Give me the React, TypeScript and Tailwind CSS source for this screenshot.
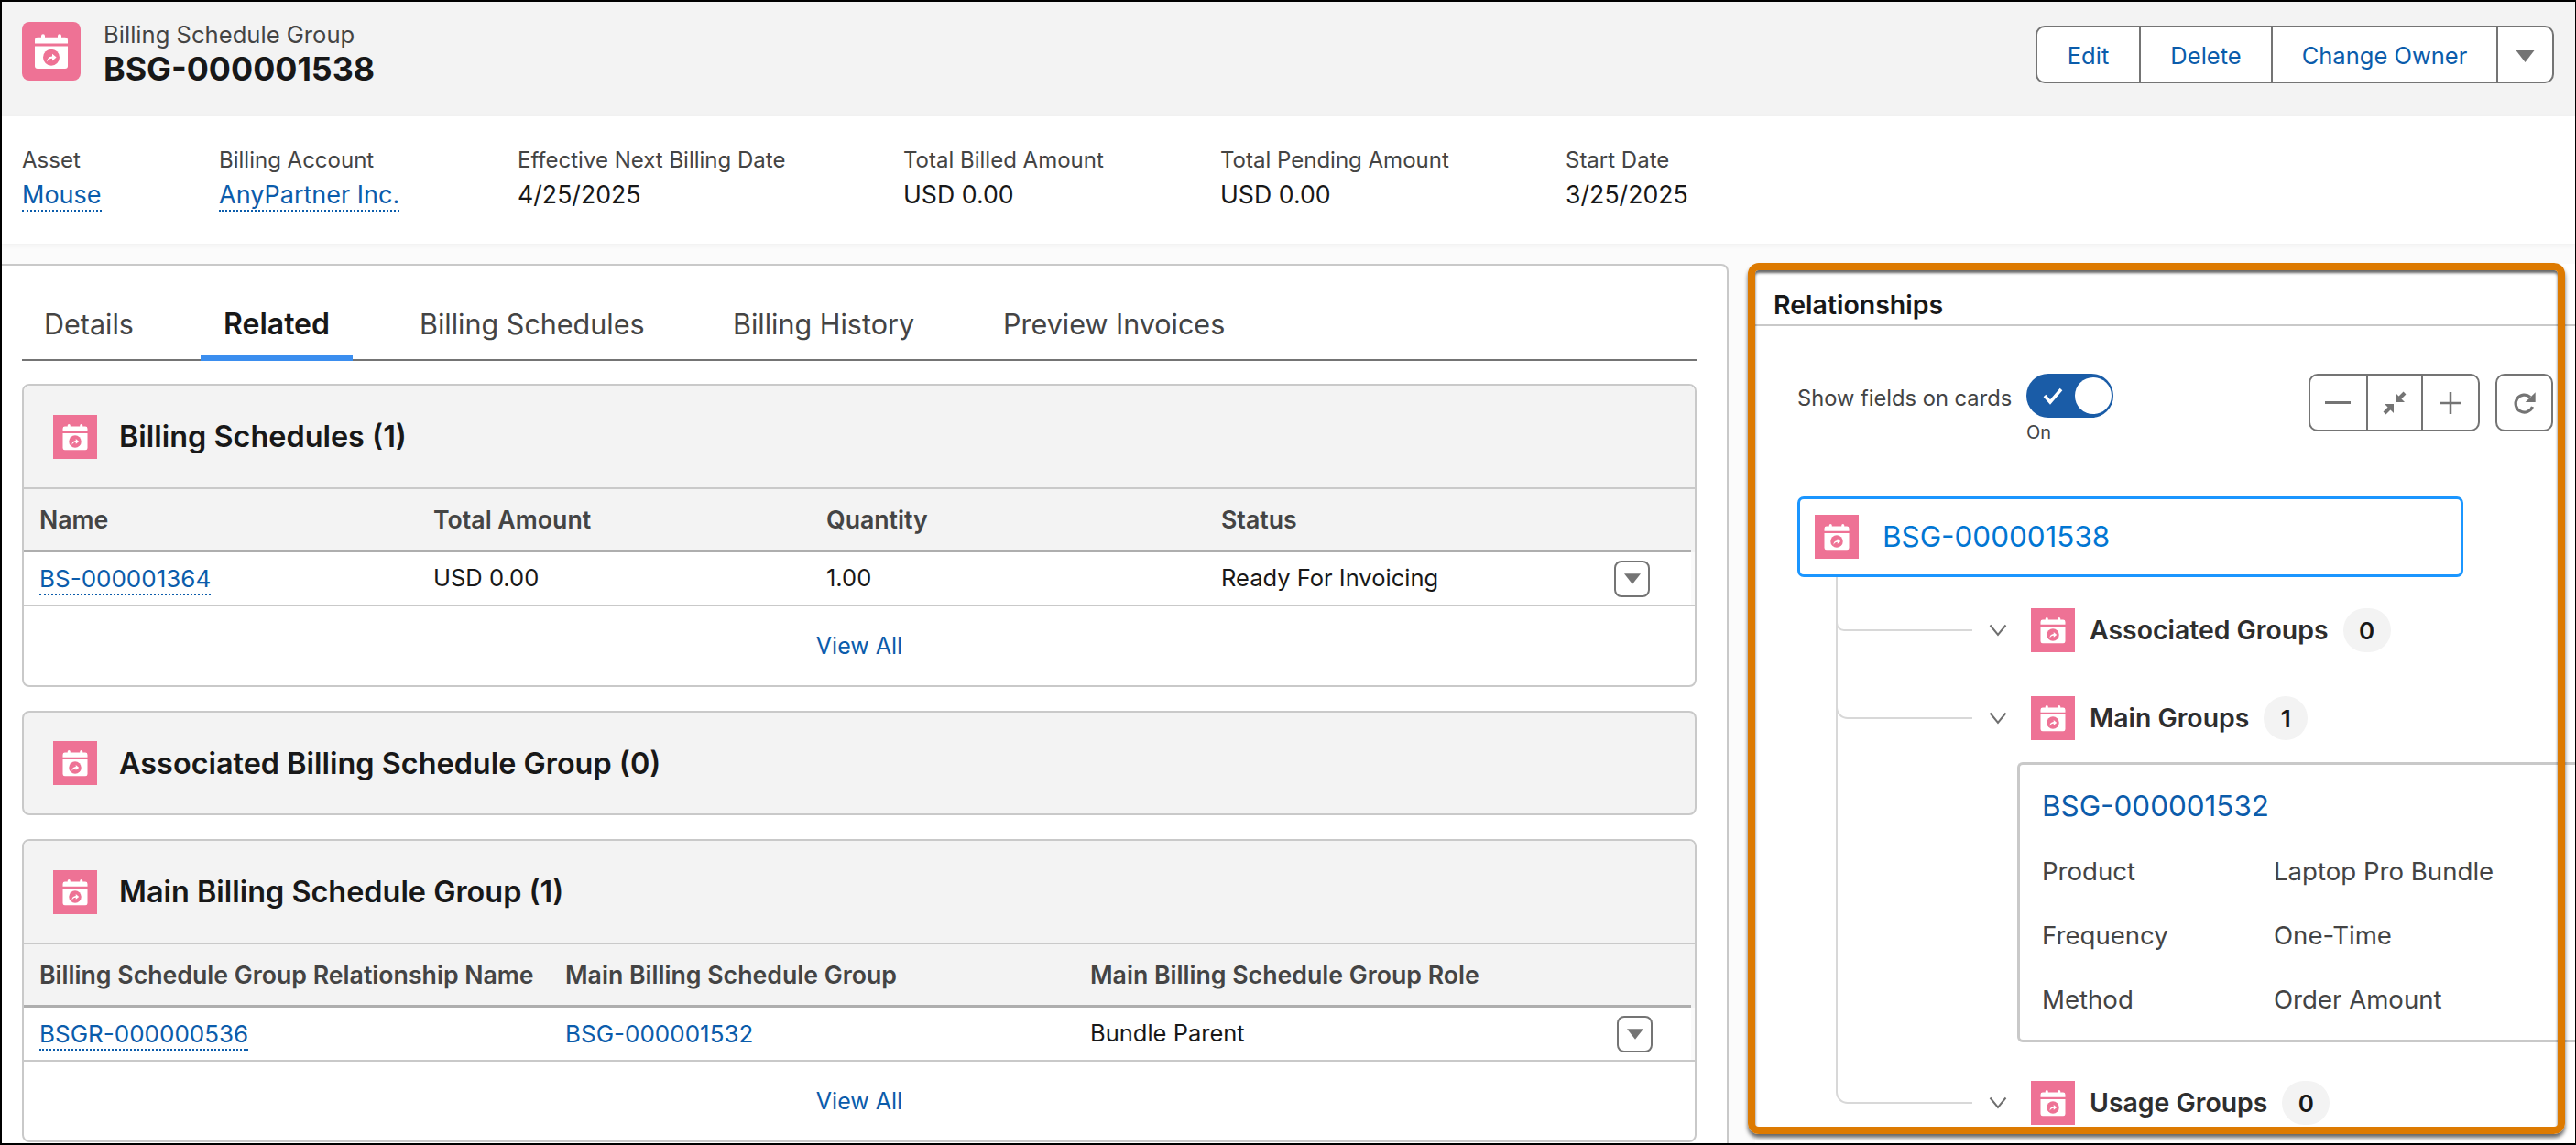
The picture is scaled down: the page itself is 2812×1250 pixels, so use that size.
import React from "react";

function CalIcon({ size, rounded }: { size: number; rounded?: boolean }) {
  return (
    <svg width={size} height={size} viewBox="0 0 64 64" className="shrink-0 block">
      <rect width="64" height="64" rx={rounded ? 8 : 0} fill="#ee7295" />
      <path d="M14 23.500v-3.500a3.200 3.200 0 0 1 3.200-3.200H21v-1.600a2 2 0 0 1 4 0v1.600h14v-1.600a2 2 0 0 1 4 0v1.600h3.800A3.200 3.200 0 0 1 50 20v3.500z" fill="#fff" />
      <path d="M14 26.500h36V48a3 3 0 0 1-3 3H17a3 3 0 0 1-3-3z" fill="#fff" />
      <circle cx="32" cy="38.700" r="9" fill="#ee7295" />
      <path d="M27.200 43.600c.2-3.600 2.400-6 5.800-6.200v-2.600l4.600 3.800-4.600 3.800v-2.600c-2.600.1-4.300 1.300-5.800 3.800z" fill="#fff" />
    </svg>
  );
}

function Caret({ w, h }: { w: number; h: number }) {
  return (
    <svg width={w} height={h} viewBox="0 0 20 13" className="block">
      <path d="M0 0h20L10 13z" fill="#747474" />
    </svg>
  );
}

function Chevron() {
  return (
    <svg width="20" height="14" viewBox="0 0 20 14" className="block shrink-0">
      <path d="M1.500 1.500 10 12l8.500-10.500" fill="none" stroke="#6f6f6f" strokeWidth="2" />
    </svg>
  );
}

function Link({ children, className = "" }: { children: React.ReactNode; className?: string }) {
  return (
    <span className={`inline-block mt-[3px] text-[#0b5cab] border-b-2 border-dotted border-[#0b5cab] leading-none pb-[3px] ${className}`}>
      {children}
    </span>
  );
}

function Field({ label, width, link, children }: { label: string; width: string; link?: boolean; children: React.ReactNode }) {
  return (
    <div className={`flex flex-col ${width}`}>
      <div className="text-[24px] leading-[32px] text-[#444444]">{label}</div>
      <div className={`${link ? "text-[27px]" : "text-[26.700px]"} leading-[32px] mt-[5px] text-[#181818]`}>{children}</div>
    </div>
  );
}

function CardHeader({ title, border }: { title: string; border?: boolean }) {
  return (
    <div className={`flex items-center pl-[32px] gap-[24px] ${border ? "border-b-2 border-[#c9c9c9] h-[113px]" : "h-[110px]"}`}>
      <CalIcon size={48} />
      <div className="text-[32.400px] font-semibold text-[#181818] leading-none mt-[2px]">{title}</div>
    </div>
  );
}

function ViewAll() {
  return (
    <div className="h-[86px] flex items-center justify-center text-[25px] text-[#0b5cab] pt-[2px]">View All</div>
  );
}

function RowButton({ className }: { className: string }) {
  return (
    <div className={`w-[39px] h-[40px] border-2 border-[#747474] rounded-[8px] flex items-center justify-center bg-white shrink-0 ${className}`}>
      <Caret w={18} h={12} />
    </div>
  );
}

function Tab({ children, active, className }: { children: string; active?: boolean; className: string }) {
  return (
    <div className={`h-[102px] flex items-center ${active ? "text-[32px] font-semibold text-[#181818]" : "text-[30.500px] text-[#444444]"} ${className}`}>
      <span className="mt-[26px]">{children}</span>
    </div>
  );
}

function TreeRow({ label, count, badgeW, className = "" }: { label: string; count: string; badgeW: string; className?: string }) {
  return (
    <div className={`ml-[209px] flex items-center h-[48px] ${className}`}>
      <Chevron />
      <div className="ml-[26px]"><CalIcon size={48} /></div>
      <div className="ml-[16px] text-[28.400px] font-semibold text-[#2e2e2e] leading-none">{label}</div>
      <div className={`ml-[16px] h-[48px] rounded-full bg-[#f3f3f3] flex items-center justify-center text-[26px] font-semibold text-[#181818] ${badgeW}`}>{count}</div>
    </div>
  );
}

function DetailRow({ k, v, className = "" }: { k: string; v: string; className?: string }) {
  return (
    <div className={`flex text-[27.600px] leading-[32px] text-[#444444] ${className}`}>
      <div className="w-[253px]">{k}</div>
      <div>{v}</div>
    </div>
  );
}

export default function App() {
  return (
    <div className="w-[2812px] h-[1250px] box-border border-2 border-r-[1px] border-black bg-[#fbfbfb] flex flex-col overflow-hidden font-['Inter','Noto_Sans',sans-serif]">
      {/* Page header */}
      <div className="h-[125px] shrink-0 bg-[#f3f3f3] flex items-start pl-[22px] pr-[23px] pt-[22px]">
        <CalIcon size={64} rounded />
        <div className="ml-[25px] flex flex-col">
          <div className="text-[25.600px] leading-[28px] text-[#444444]">Billing Schedule Group</div>
          <div className="text-[35.800px] leading-[44px] font-bold text-[#181818] mt-[1px]">BSG-000001538</div>
        </div>
        <div className="ml-auto mt-[4px] h-[63px] w-[566px] flex border-2 border-[#747474] rounded-[10px] bg-white text-[25.500px] text-[#0b5cab]">
          <div className="w-[111px] flex items-center justify-center pt-[3px]">Edit</div>
          <div className="w-[144px] flex items-center justify-center border-l-2 border-[#747474] pt-[3px]">Delete</div>
          <div className="w-[246px] flex items-center justify-center border-l-2 border-[#747474] pt-[3px]">Change Owner</div>
          <div className="flex-1 flex items-center justify-center border-l-2 border-[#747474] pt-[3px]"><Caret w={21} h={13} /></div>
        </div>
      </div>

      {/* Highlights */}
      <div className="h-[139px] shrink-0 bg-white flex items-start pl-[22px] pt-[32px] shadow-[0_2px_6px_rgba(0,0,0,0.05)] relative">
        <Field label="Asset" width="w-[215px]" link><Link>Mouse</Link></Field>
        <Field label="Billing Account" width="w-[326px]" link><Link>AnyPartner Inc.</Link></Field>
        <Field label="Effective Next Billing Date" width="w-[421px]">4/25/2025</Field>
        <Field label="Total Billed Amount" width="w-[346px]">USD 0.00</Field>
        <Field label="Total Pending Amount" width="w-[377px]">USD 0.00</Field>
        <Field label="Start Date" width="w-[300px]">3/25/2025</Field>
      </div>

      <div className="h-[22px] shrink-0" />

      {/* Body */}
      <div className="flex-1 min-h-0 flex relative">
        {/* Left */}
        <div className="w-[1885px] shrink-0 bg-white border-t-2 border-r-2 border-[#c9c9c9] rounded-tr-[8px] pl-[22px] overflow-hidden">
          <div className="w-[1828px] h-[104px] box-border border-b-2 border-[#747474] flex">
            <Tab className="pl-[24px] w-[195px]">Details</Tab>
            <div className="w-[166px] h-[104px] box-border border-b-[6px] border-[#3b8eef] flex justify-center shrink-0">
              <Tab active className="">Related</Tab>
            </div>
            <Tab className="pl-[73px] w-[415px]">Billing Schedules</Tab>
            <Tab className="pl-[0px] w-[295px]">Billing History</Tab>
            <Tab className="">Preview Invoices</Tab>
          </div>

          {/* Card 1 */}
          <div className="w-[1828px] mt-[25px] h-[331px] box-border border-2 border-[#c9c9c9] rounded-[8px] bg-white overflow-hidden">
            <div className="bg-[#f3f3f3]">
              <CardHeader title="Billing Schedules (1)" border />
              <div className="h-[69px] mr-[4px] border-b-[3px] border-[#aeaeae] flex items-center pl-[17px] text-[26.700px] font-semibold text-[#444444]">
                <div className="w-[430px]">Name</div>
                <div className="w-[429px]">Total Amount</div>
                <div className="w-[431px]">Quantity</div>
                <div>Status</div>
              </div>
            </div>
            <div className="h-[59px] border-b-2 border-[#c9c9c9] bg-[#fafafa]">
              <div className="h-full mr-[4px] bg-white flex items-center pl-[17px] text-[25.500px] text-[#181818]">
                <div className="w-[430px] text-[26px]"><Link>BS-000001364</Link></div>
                <div className="w-[429px]">USD 0.00</div>
                <div className="w-[431px]">1.00</div>
                <div>Ready For Invoicing</div>
                <RowButton className="ml-auto mr-[45px]" />
              </div>
            </div>
            <ViewAll />
          </div>

          {/* Card 2 */}
          <div className="w-[1828px] mt-[26px] h-[114px] box-border border-2 border-[#c9c9c9] rounded-[8px] bg-[#f3f3f3] overflow-hidden">
            <CardHeader title="Associated Billing Schedule Group (0)" />
          </div>

          {/* Card 3 */}
          <div className="w-[1828px] mt-[26px] h-[331px] box-border border-2 border-[#c9c9c9] rounded-[8px] bg-white overflow-hidden">
            <div className="bg-[#f3f3f3]">
              <CardHeader title="Main Billing Schedule Group (1)" border />
              <div className="h-[69px] mr-[4px] border-b-[3px] border-[#aeaeae] flex items-center pl-[17px] text-[26.700px] font-semibold text-[#444444]">
                <div className="w-[574px]">Billing Schedule Group Relationship Name</div>
                <div className="w-[573px]">Main Billing Schedule Group</div>
                <div>Main Billing Schedule Group Role</div>
              </div>
            </div>
            <div className="h-[59px] border-b-2 border-[#c9c9c9] bg-[#fafafa]">
              <div className="h-full mr-[4px] bg-white flex items-center pl-[17px] text-[25.500px] text-[#181818]">
                <div className="w-[574px] text-[26px]"><Link>BSGR-000000536</Link></div>
                <div className="w-[573px] text-[26px] text-[#0b5cab]">BSG-000001532</div>
                <div>Bundle Parent</div>
                <RowButton className="ml-auto mr-[42px]" />
              </div>
            </div>
            <ViewAll />
          </div>
        </div>

        {/* Right */}
        <div className="flex-1 min-w-0 pl-[29px] bg-[#fbfbfb] relative">
          <div className="h-full bg-white pt-[8px]">
            <div className="h-[60px] border-b-2 border-[#c9c9c9] flex items-center pl-[20px] text-[28.500px] font-semibold text-[#181818]">
              <span className="mt-[16px]">Relationships</span>
            </div>
            <div className="mt-[52px] h-[76px] flex items-start pl-[46px] pr-[24px]">
              <div className="text-[23.700px] leading-[32px] text-[#444444] mt-[11px] w-[250px]">Show fields on cards</div>
              <div className="flex flex-col">
                <div className="w-[95px] h-[48px] rounded-full bg-[#1a5ca7] flex items-center pl-[17px] relative">
                  <svg width="24" height="20" viewBox="0 0 24 20" className="block">
                    <path d="M3 10l6 7L21 3" fill="none" stroke="#fff" strokeWidth="3.500" />
                  </svg>
                  <div className="absolute right-[2px] top-[4px] w-[40px] h-[40px] rounded-full bg-white" />
                </div>
                <div className="text-[20px] leading-[24px] text-[#444444] mt-[4px]">On</div>
              </div>
              <div className="ml-auto h-[63px] w-[187px] flex border-2 border-[#747474] rounded-[10px] bg-white">
                <div className="flex-1 flex items-center justify-center">
                  <svg width="28" height="4" viewBox="0 0 28 4" className="block"><rect width="28" height="3" fill="#747474" /></svg>
                </div>
                <div className="w-[62px] flex items-center justify-center border-x-2 border-[#747474]">
                  <svg width="28" height="28" viewBox="0 0 28 28" className="block" fill="#747474">
                    <path d="M15 3v10h10z" />
                    <path d="M18 10l7-7" stroke="#747474" strokeWidth="4" />
                    <path d="M13 25V15H3z" />
                    <path d="M10 18l-7 7" stroke="#747474" strokeWidth="4" />
                  </svg>
                </div>
                <div className="flex-1 flex items-center justify-center">
                  <svg width="24" height="24" viewBox="0 0 24 24" className="block"><path d="M12 0v24M0 12h24" stroke="#747474" strokeWidth="2.500" /></svg>
                </div>
              </div>
              <div className="ml-[17px] w-[63px] h-[63px] border-2 border-[#747474] rounded-[10px] flex items-center justify-center bg-white">
                <svg width="26" height="26" viewBox="0 0 26 26" className="block">
                  <path d="M19 6.500A9.500 9.500 0 1 0 21.500 17" fill="none" stroke="#747474" strokeWidth="3.200" />
                  <path d="M24.700 1.300V12h-11z" fill="#747474" />
                </svg>
              </div>
            </div>

            {/* Tree */}
            <div className="mt-[58px] ml-[46px] relative">
              <svg width="160" height="580" viewBox="0 0 160 580" className="absolute left-[42px] top-[88px]" fill="none" stroke="#d8d8d8" strokeWidth="2">
                <path d="M1 0V562a12 12 0 0 0 12 12H149" />
                <path d="M1 0V50a8 8 0 0 0 8 8H149" />
                <path d="M1 0V142a12 12 0 0 0 12 12H149" />
              </svg>
              <div className="w-[727px] h-[88px] box-border border-[3.500px] border-[#1b96ff] rounded-[7px] bg-white flex items-center pl-[16px] relative">
                <CalIcon size={48} />
                <div className="ml-[26px] text-[31.400px] text-[#0176d3] leading-none mt-[2px]">BSG-000001538</div>
              </div>
              <TreeRow label="Associated Groups" count="0" badgeW="w-[52px]" className="mt-[34px] relative" />
              <TreeRow label="Main Groups" count="1" badgeW="w-[48px]" className="mt-[48px] relative" />
              <div className="mt-[24px] ml-[240px] h-[306px] box-border border-[3px] border-r-0 border-[#c9c9c9] rounded-l-[6px] pl-[24px] bg-white relative">
                <div className="text-[31.400px] leading-none text-[#0b5cab] mt-[30px]">BSG-000001532</div>
                <DetailRow k="Product" v="Laptop Pro Bundle" className="mt-[39px]" />
                <DetailRow k="Frequency" v="One-Time" className="mt-[38px]" />
                <DetailRow k="Method" v="Order Amount" className="mt-[38px]" />
              </div>
              <TreeRow label="Usage Groups" count="0" badgeW="w-[52px]" className="mt-[42px] relative" />
            </div>
          </div>
          {/* Annotation outline */}
          <div className="absolute left-[21px] -top-[1px] w-[892px] h-[951px] box-border border-[8px] border-[#dd7a01] rounded-[12px] pointer-events-none shadow-[0_4px_4px_rgba(0,0,0,0.6),inset_0_3px_3px_rgba(0,0,0,0.6)]" />
        </div>
      </div>
    </div>
  );
}
